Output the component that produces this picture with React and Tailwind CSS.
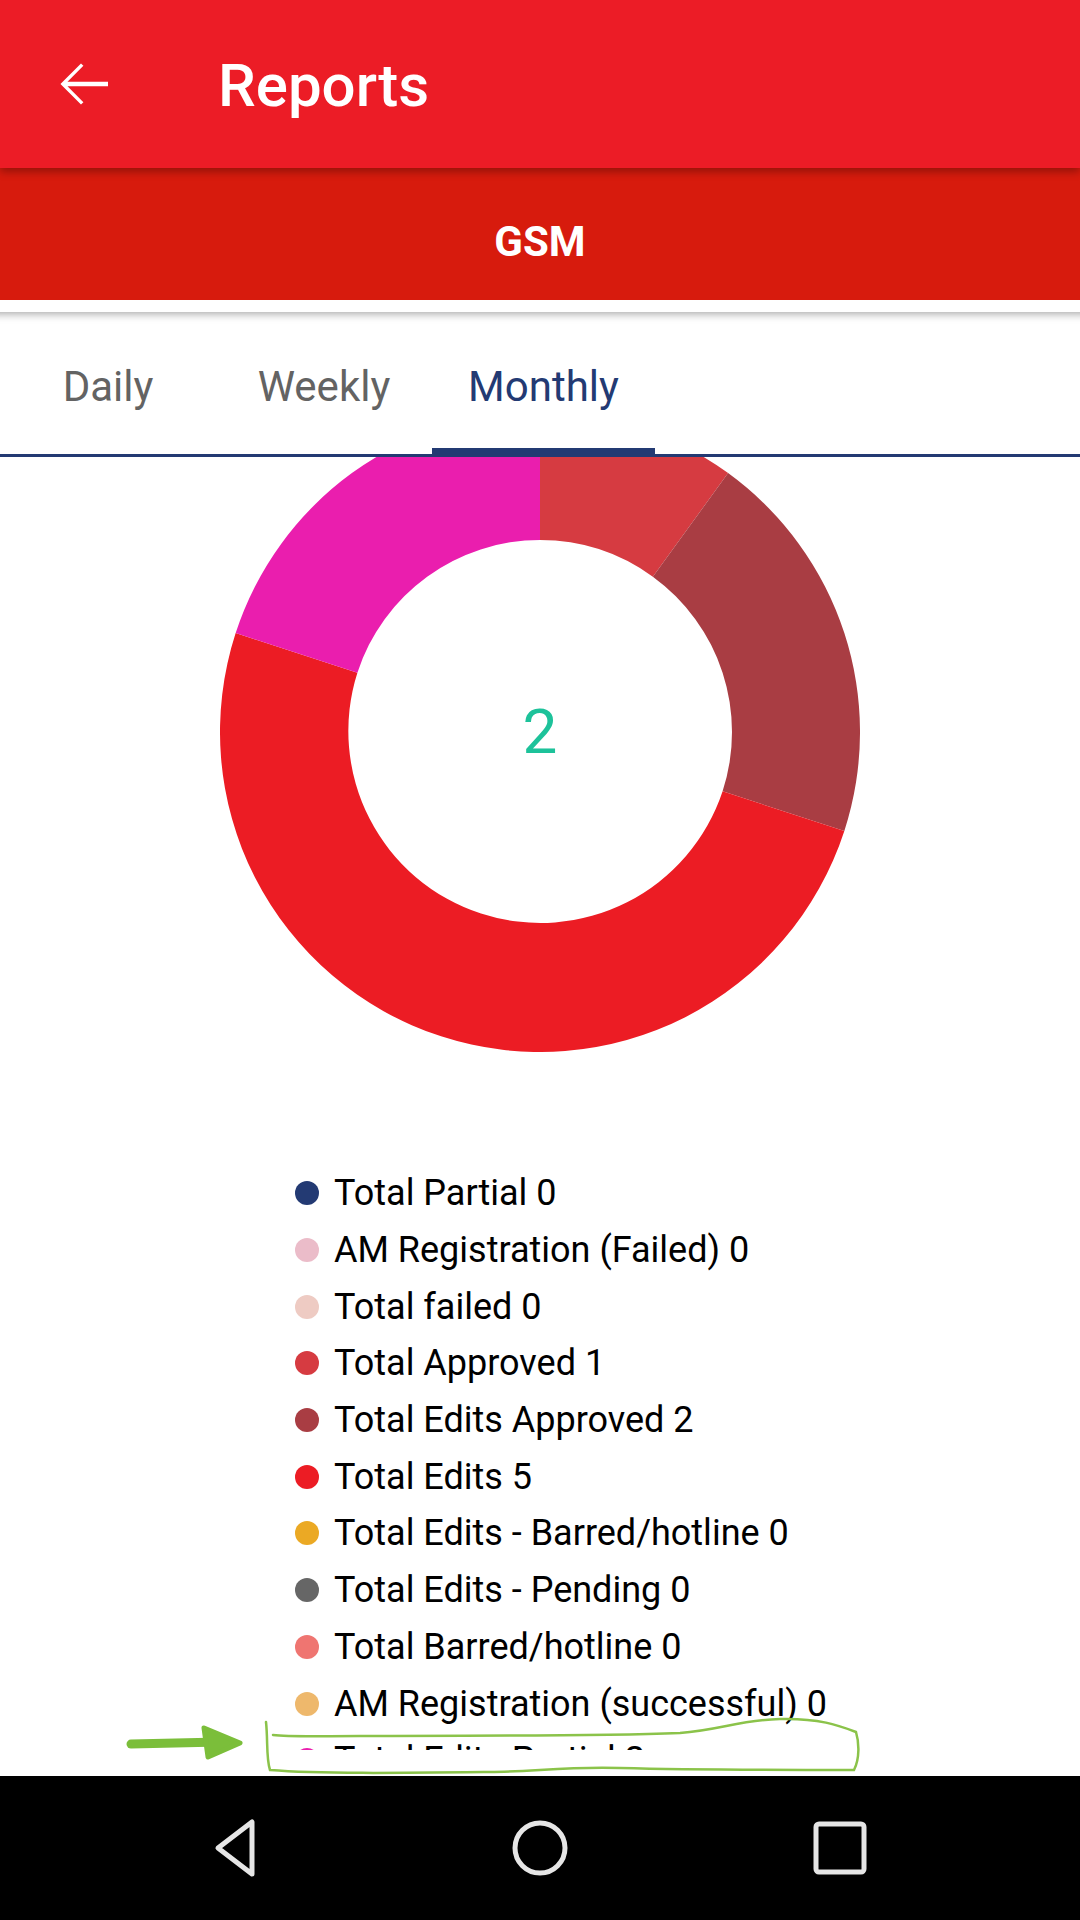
import React from 'react';

const slices = [
  { value: 1, color: '#D63B41' },
  { value: 2, color: '#A93D43' },
  { value: 5, color: '#EC1C24' },
  { value: 2, color: '#EA1EAE' },
];

const legend = [
  ['Total Partial 0', '#233A73'],
  ['AM Registration (Failed) 0', '#EBBCC9'],
  ['Total failed 0', '#EECBC3'],
  ['Total Approved 1', '#D63B41'],
  ['Total Edits Approved 2', '#A93D43'],
  ['Total Edits 5', '#EC1C24'],
  ['Total Edits - Barred/hotline 0', '#EBA924'],
  ['Total Edits - Pending 0', '#666666'],
  ['Total Barred/hotline 0', '#EF7571'],
  ['AM Registration (successful) 0', '#EEB86C'],
  ['Total Edits Partial 2', '#EA1EAE'],
];

// annular sector path, angles in radians measured clockwise from 12 o'clock
const sector = (a0, a1, R, r, c) => {
  const pt = (a, rad) => `${(c + rad * Math.sin(a)).toFixed(2)} ${(c - rad * Math.cos(a)).toFixed(2)}`;
  const large = a1 - a0 > Math.PI ? 1 : 0;
  return `M${pt(a0, R)} A${R} ${R} 0 ${large} 1 ${pt(a1, R)} L${pt(a1, r)} A${r} ${r} 0 ${large} 0 ${pt(a0, r)} Z`;
};

const Donut = () => {
  const total = slices.reduce((s, x) => s + x.value, 0);
  let acc = 0;
  return (
    <svg width="640" height="640" viewBox="0 0 640 640">
      {slices.map((s, i) => {
        const a0 = (acc / total) * Math.PI * 2;
        acc += s.value;
        const a1 = (acc / total) * Math.PI * 2;
        return <path key={i} d={sector(a0, a1, 320, 192, 320)} fill={s.color} />;
      })}
    </svg>
  );
};

const tabs = [
  { label: 'Daily', w: 'w-[216px]' },
  { label: 'Weekly', w: 'w-[216px]' },
  { label: 'Monthly', w: 'w-[223px]', active: true },
];

const App = () => {
  return (
    <div className="relative w-[1080px] h-[1920px] flex flex-col bg-white overflow-hidden font-['Roboto',sans-serif]">
      {/* App bar */}
      <div className="relative z-10 h-[168px] shrink-0 flex items-center bg-[#EC1C26] shadow-[0_4px_8px_rgba(0,0,0,0.3)]">
        <div className="w-[72px] h-[72px] ml-[48px] flex items-center justify-center">
          <svg width="72" height="72" viewBox="0 0 24 24" fill="#ffffff">
            <path d="M20 11.25H6.5l5.3-5.3L11 5.15 4.15 12 11 18.85l.8-.8-5.3-5.3H20z" />
          </svg>
        </div>
        <h1 className="ml-[98px] pt-[4px] text-[60px] font-medium text-white leading-none">Reports</h1>
      </div>

      {/* GSM strip */}
      <div className="h-[132px] shrink-0 flex items-center justify-center pt-[14px] bg-[#D71B0D]">
        <span className="text-[42px] font-bold text-white">GSM</span>
      </div>

      <div className="h-[12px] shrink-0 bg-white" />

      {/* Tabs */}
      <div className="h-[145px] shrink-0 flex border-b-[3px] border-[#233A73] bg-white shadow-[inset_0_12px_8px_-10px_rgba(0,0,0,0.35)]">
        {tabs.map((t) => (
          <div key={t.label} className={`relative ${t.w} flex items-center justify-center pt-[6px]`}>
            <span className={`text-[42px] ${t.active ? 'text-[#233A73]' : 'text-[#636363]'}`}>{t.label}</span>
            {t.active && <div className="absolute left-0 right-0 bottom-[-3px] h-[9px] bg-[#233A73]" />}
          </div>
        ))}
      </div>

      {/* Scroll content */}
      <div className="flex-1 overflow-hidden">
        <div className="relative mt-[-45px] flex justify-center">
          <Donut />
          <div className="absolute inset-0 flex items-center justify-center">
            <span className="text-[62px] text-[#1DC29A] leading-none">2</span>
          </div>
        </div>
        <div className="mt-[113px] pl-[295px] flex flex-col">
          {legend.map(([label, color]) => (
            <div key={label} className="h-[56.7px] flex items-center gap-[15px]">
              <span className="w-[24px] h-[24px] rounded-full shrink-0" style={{ backgroundColor: color }} />
              <span className="text-[36px] text-black leading-none">{label}</span>
            </div>
          ))}
        </div>
      </div>

      <div className="h-[26px] shrink-0 bg-white" />

      {/* Navigation bar */}
      <div className="h-[144px] shrink-0 bg-black flex items-center justify-center gap-[228px]">
        <svg width="72" height="72" viewBox="0 0 72 72" fill="none" stroke="#E6E6E6" strokeWidth="5" strokeLinejoin="round">
          <path d="M48 10 L48 62 L14 36 Z" />
        </svg>
        <svg width="72" height="72" viewBox="0 0 72 72" fill="none" stroke="#E6E6E6" strokeWidth="5">
          <circle cx="36" cy="36" r="25" />
        </svg>
        <svg width="72" height="72" viewBox="0 0 72 72" fill="none" stroke="#E6E6E6" strokeWidth="5">
          <rect x="12" y="12" width="48" height="48" rx="3" />
        </svg>
      </div>

      {/* hand-drawn annotation */}
      <svg className="absolute left-[100px] top-[1700px] pointer-events-none" width="780" height="90" viewBox="0 0 780 90" fill="none">
        <path d="M31 44 L120 42" stroke="#7BBE3A" strokeWidth="9" strokeLinecap="round" />
        <path d="M104 28 L140 43 L108 57 Z" fill="#7BBE3A" stroke="#7BBE3A" strokeWidth="5" strokeLinejoin="round" />
        <path
          d="M166 22 C168 40 166 58 170 70 C220 74 300 73 390 72 C430 72 470 66 520 68 C600 70 700 70 754 70 C760 58 759 42 756 32 C740 26 720 18 680 19 C640 20 620 30 580 33 C480 37 360 35 260 36 C220 36 190 37 173 35"
          stroke="#8BC34A"
          strokeWidth="2.5"
          strokeLinecap="round"
        />
      </svg>
    </div>
  );
};

export default App;
